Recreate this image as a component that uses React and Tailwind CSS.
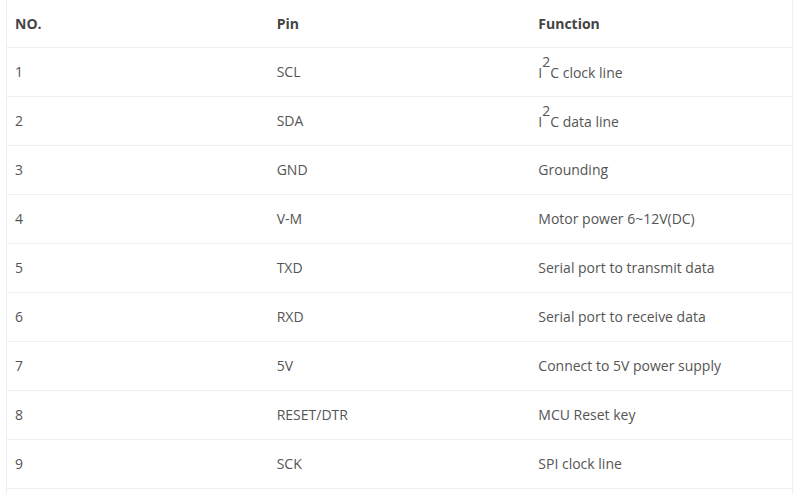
import React from "react";

const Sup = () => (
  <sup className="text-[14px] relative -top-[5px] align-super leading-none">2</sup>
);

const rows = [
  ["1", "SCL", <>I<Sup />C clock line</>],
  ["2", "SDA", <>I<Sup />C data line</>],
  ["3", "GND", "Grounding"],
  ["4", "V-M", "Motor power 6~12V(DC)"],
  ["5", "TXD", "Serial port to transmit data"],
  ["6", "RXD", "Serial port to receive data"],
  ["7", "5V", "Connect to 5V power supply"],
  ["8", "RESET/DTR", "MCU Reset key"],
  ["9", "SCK", "SPI clock line"],
];

export default function App() {
  return (
    <div className="bg-white w-[801px] h-[494px] overflow-hidden pl-[6px] pr-[8px]" style={{ fontFamily: '"Open Sans", sans-serif' }}>
      <div className="border-x border-[#eeeeee] h-[494px]">
        <table className="w-full border-collapse table-fixed text-[14px] text-[#555]">
          <thead>
            <tr className="h-[47px] border-b border-[#eeeeee]">
              <th className="text-left font-bold text-[#444] pl-[8px]">NO.</th>
              <th className="text-left font-bold text-[#444] pl-[8px]">Pin</th>
              <th className="text-left font-bold text-[#444] pl-[8px]">Function</th>
            </tr>
          </thead>
          <tbody>
            {rows.map((r, i) => (
              <tr key={i} className="h-[49px] border-b border-[#eeeeee]">
                <td className="pl-[8px]">{r[0]}</td>
                <td className="pl-[8px]">{r[1]}</td>
                <td className="pl-[8px]">{r[2]}</td>
              </tr>
            ))}
          </tbody>
        </table>
      </div>
    </div>
  );
}
